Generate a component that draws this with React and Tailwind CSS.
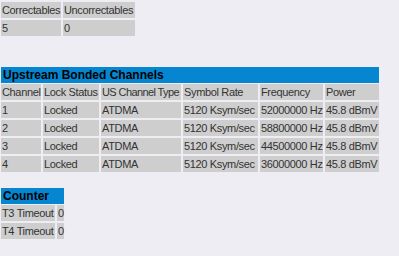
import React from "react";

const cell = "bg-[#cecece] h-4 leading-4 pl-px whitespace-nowrap";

const rows = [
  ["1", "Locked", "ATDMA", "5120 Ksym/sec", "52000000 Hz", "45.8 dBmV"],
  ["2", "Locked", "ATDMA", "5120 Ksym/sec", "58800000 Hz", "45.8 dBmV"],
  ["3", "Locked", "ATDMA", "5120 Ksym/sec", "44500000 Hz", "45.8 dBmV"],
  ["4", "Locked", "ATDMA", "5120 Ksym/sec", "36000000 Hz", "45.8 dBmV"],
];

const heads = ["Channel", "Lock Status", "US Channel Type", "Symbol Rate", "Frequency", "Power"];

const titleFont = { fontFamily: '"Liberation Sans", Arial, sans-serif' };

export default function App() {
  return (
    <div
      className="w-[399px] h-[256px] bg-[#eeedf3] text-[#333] text-[11px] tracking-[-0.35px] pl-px pt-[2px]"
      style={{ fontFamily: '"Liberation Sans", Arial, sans-serif' }}
    >
      {/* codeword counts */}
      <div className="grid grid-cols-[60px_72px] gap-[2px] w-max">
        <div className={cell}>Correctables</div>
        <div className={cell}>Uncorrectables</div>
        <div className={cell}>5</div>
        <div className={cell}>0</div>
      </div>

      {/* upstream channels */}
      <div className="mt-[31px] w-[378px]">
        <div className="bg-[#0686d0] h-4 leading-4 px-[2px] text-[12px] tracking-normal font-bold text-black" style={titleFont}>
          Upstream Bonded Channels
        </div>
        <div className="grid grid-cols-[40px_56px_80px_75px_63px_54px] gap-[2px] mt-px">
          {heads.map((h) => (
            <div key={h} className={cell + (h === "US Channel Type" ? " tracking-[-0.6px]" : "")}>
              {h}
            </div>
          ))}
          {rows.map((r) =>
            r.map((v, i) => (
              <div key={r[0] + i} className={cell}>{v}</div>
            ))
          )}
        </div>
      </div>

      {/* timeout counters */}
      <div className="mt-[16px] w-[63px]">
        <div className="bg-[#0686d0] h-4 leading-4 px-[2px] text-[12px] tracking-normal font-bold text-black" style={titleFont}>
          Counter
        </div>
        <div className="grid grid-cols-[54px_7px] gap-[2px] mt-px">
          <div className={cell}>T3 Timeout</div>
          <div className={cell}>0</div>
          <div className={cell}>T4 Timeout</div>
          <div className={cell}>0</div>
        </div>
      </div>
    </div>
  );
}
